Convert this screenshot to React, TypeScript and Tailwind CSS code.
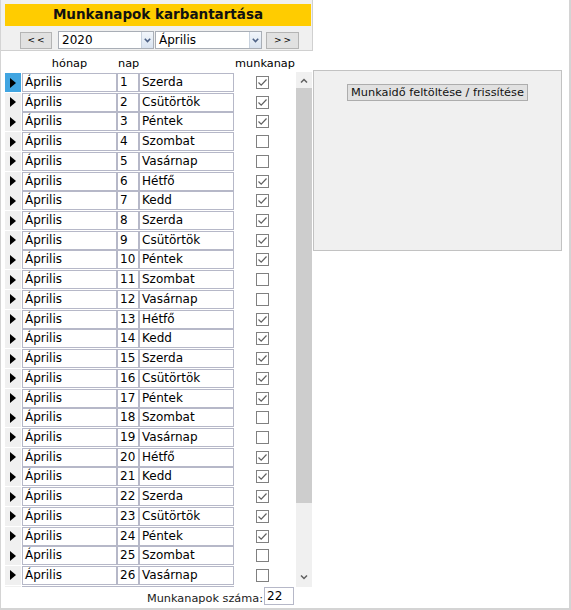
import React from "react";

const DAYS = ["Szerda", "Csütörtök", "Péntek", "Szombat", "Vasárnap", "Hétfő", "Kedd"];

function Check({ on }: { on: boolean }) {
  return (
    <svg width="13" height="13" viewBox="0 0 13 13" className="block">
      <rect x="0.5" y="0.5" width="12" height="12" fill="#fff" stroke="#808080" />
      {on && <polyline points="2.5,6.5 5.2,9.2 10.5,3.5" fill="none" stroke="#606060" strokeWidth="1.2" />}
    </svg>
  );
}

function Arrow() {
  return (
    <svg width="6" height="10" viewBox="0 0 6 10" className="block">
      <polygon points="0,0 6,5 0,10" fill="#000" />
    </svg>
  );
}

function Chevron({ up }: { up?: boolean }) {
  return (
    <svg width="8" height="5" viewBox="0 0 8 5" className="block">
      <polyline
        points={up ? "1,4.5 4,1.5 7,4.5" : "1,0.5 4,3.5 7,0.5"}
        fill="none"
        stroke="#606060"
        strokeWidth="1.5"
      />
    </svg>
  );
}

function SelectBox({ value, width }: { value: string; width: string }) {
  return (
    <div className={`${width} h-[18px] flex border border-[#a9aeb6] bg-white`}>
      <div className="flex-1 pl-[3px] text-[12px] leading-[16px] text-black">{value}</div>
      <div className="w-[12px] h-full bg-gradient-to-b from-[#f2f6fb] to-[#d9e3f0] border-l border-[#c8d2de] flex items-center justify-center">
        <svg width="7" height="5" viewBox="0 0 7 5" className="block">
          <polyline points="0.8,0.8 3.5,3.6 6.2,0.8" fill="none" stroke="#4d6185" strokeWidth="1.6" />
        </svg>
      </div>
    </div>
  );
}

export default function App() {
  const rows = Array.from({ length: 27 }, (_, i) => {
    const day = DAYS[i % 7];
    const work = day !== "Szombat" && day !== "Vasárnap";
    return { n: i + 1, day, work, hidden: i === 26 };
  });

  return (
    <div className="w-[571px] h-[610px] bg-white border-r-2 border-b-2 border-l border-[#d4d4d4] font-['DejaVu_Sans',sans-serif] text-black flex items-start overflow-hidden">
      <div className="w-[312px] flex flex-col shrink-0">
        {/* Header panel */}
        <div className="h-[51px] bg-[#f0f0f0] border-r border-b border-[#d0d0d0] pt-[4px] pl-[4px] pr-[1px] flex flex-col">
          <div className="h-[22px] w-[306px] bg-[#ffcc00] flex items-center justify-center text-[13.5px] font-bold leading-none text-[#111]">
            Munkanapok karbantartása
          </div>
          <div className="flex items-center mt-[5px]">
            <div className="ml-[15px] w-[32px] h-[17px] bg-[#e1e1e1] border border-[#b4b4b4] flex items-center justify-center text-[9px] leading-none tracking-[2px] pl-[2px]">
              &lt;&lt;
            </div>
            <div className="ml-[6px]">
              <SelectBox value="2020" width="w-[96px]" />
            </div>
            <div className="ml-[1px]">
              <SelectBox value="Április" width="w-[107px]" />
            </div>
            <div className="ml-[4px] w-[33px] h-[17px] bg-[#e1e1e1] border border-[#b4b4b4] flex items-center justify-center text-[9px] leading-none tracking-[2px] pl-[2px]">
              &gt;&gt;
            </div>
          </div>
        </div>

        {/* Column labels */}
        <div className="h-[21px] flex items-end pb-[2px] pl-[4px] text-[11.3px] leading-[13px] text-black">
          <div className="w-[17px]" />
          <div className="w-[95px] text-center">hónap</div>
          <div className="w-[22px] pl-[1px]">nap</div>
          <div className="w-[95px]" />
          <div className="w-[62px] text-center">munkanap</div>
        </div>

        {/* List with scrollbar */}
        <div className="h-[515px] flex pl-[4px]">
          <div className="w-[290px] h-full overflow-hidden pt-[1px]">
            {rows.map((r, i) => (
              <div key={r.n} className="h-[19.72px] flex items-start">
                <div
                  className={`w-[16px] h-[19px] flex items-center justify-center ${
                    i === 0 ? "bg-[#41a5e1]" : "bg-[#f0f0f0]"
                  }`}
                >
                  {!r.hidden && <Arrow />}
                </div>
                <div className="ml-[1px] w-[95px] h-[19px] border border-[#b6b8c8] bg-white pl-[2px] text-[12px] leading-[17px]">
                  {r.hidden ? "" : "Április"}
                </div>
                <div className="w-[22px] h-[19px] border border-[#b6b8c8] bg-white pl-[2px] text-[12px] leading-[17px]">
                  {r.hidden ? "" : r.n}
                </div>
                <div className="w-[95px] h-[19px] border border-[#b6b8c8] bg-white pl-[2px] text-[12px] leading-[17px]">
                  {r.hidden ? "" : r.day}
                </div>
                <div className="w-[57px] h-[19px] flex items-center justify-center">
                  {!r.hidden && <Check on={r.work} />}
                </div>
              </div>
            ))}
          </div>
          <div className="ml-[1px] w-[16px] h-full flex flex-col bg-[#f0f0f0]">
            <div className="h-[16px] flex items-center justify-center">
              <Chevron up />
            </div>
            <div className="h-[415px] bg-[#cdcdcd]" />
            <div className="flex-1 flex items-end justify-center pb-[7px]">
              <Chevron />
            </div>
          </div>
        </div>

        {/* Footer */}
        <div className="h-[20px] flex items-start justify-end pr-[19px]">
          <div className="text-[11.3px] leading-[18px] text-[#1a1a1a] pt-[3px]">Munkanapok száma:</div>
          <div className="ml-[1px] w-[30px] h-[18px] border border-[#b6b8c8] bg-white pl-[2px] text-[12px] leading-[16px]">
            22
          </div>
        </div>
      </div>

      {/* Right panel */}
      <div className="mt-[70px] w-[249px] h-[181px] bg-[#f0f0f0] border border-[#c2c2c2] flex justify-center pt-[13px]">
        <div className="h-[17px] px-[3px] bg-[#e1e1e1] border border-[#adadad] text-[11.3px] leading-[15px] text-[#111] whitespace-nowrap">
          Munkaidő feltöltése / frissítése
        </div>
      </div>
    </div>
  );
}
